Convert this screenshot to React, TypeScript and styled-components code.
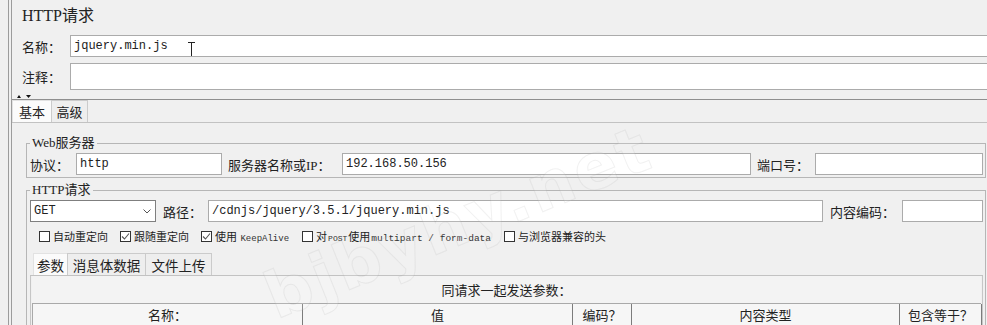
import React from "react";
import styled, { createGlobalStyle } from "styled-components";

const serif = `"Liberation Serif", "Noto Sans CJK SC", serif`;
const cjk = `"Noto Sans CJK SC", sans-serif`;
const mono = `"Liberation Mono", "Noto Sans CJK SC", monospace`;

const GlobalStyle = createGlobalStyle`
  html, body {
    margin: 0;
    padding: 0;
    background: #f0f0f0;
  }
  body {
    font-family: ${cjk};
    color: #1c1c1c;
  }
  * {
    box-sizing: border-box;
  }
`;

const Window = styled.div`
  position: relative;
  width: 987px;
  height: 325px;
  overflow: hidden;
  padding-left: 8px;
`;

const Frame = styled.div`
  height: 100%;
  border-left: 4px double #9c9c9c;
  display: flex;
  flex-direction: column;
`;

const Header = styled.div`
  padding: 4px 0 0 10px;
  display: flex;
  flex-direction: column;
`;

const Title = styled.div`
  font-family: ${serif};
  font-size: 16px;
  line-height: 24px;
  height: 24px;
  color: #222;
`;

const FieldRow = styled.div<{ $h: number; $mt?: number }>`
  display: flex;
  align-items: center;
  height: ${(p) => p.$h}px;
  margin-top: ${(p) => p.$mt ?? 0}px;
`;

const Label = styled.span<{ $w: number; $pad?: number }>`
  flex: none;
  width: ${(p) => p.$w}px;
  padding-left: ${(p) => p.$pad ?? 0}px;
  font-family: ${serif};
  font-size: 13px;
  white-space: nowrap;
  color: #222;
`;

const TextBox = styled.div<{ $w?: number; $open?: boolean }>`
  position: relative;
  flex: ${(p) => (p.$w ? "none" : 1)};
  width: ${(p) => (p.$w ? `${p.$w}px` : "auto")};
  height: 100%;
  background: #fff;
  border: 1px solid #ababab;
  border-right: ${(p) => (p.$open ? "none" : "1px solid #ababab")};
  padding-left: 3px;
  font-family: ${mono};
  font-size: 12px;
  color: #222;
  display: flex;
  align-items: center;
  white-space: nowrap;
  overflow: hidden;
`;

const Cursor = styled.svg`
  position: absolute;
  left: 117px;
  top: 6px;
`;

const Splitter = styled.div`
  height: 10px;
  border-bottom: 1px solid #8f8f8f;
  display: flex;
  align-items: flex-end;
  padding-left: 5px;
`;

const TabStrip = styled.div<{ $pad?: number }>`
  display: flex;
  height: 23px;
  padding-left: ${(p) => p.$pad ?? 0}px;
  border-bottom: 1px solid #c2c2c2;
  flex: none;
`;

const Tab = styled.div<{ $w: number; $active?: boolean; $size?: number }>`
  width: ${(p) => p.$w}px;
  height: 22px;
  display: flex;
  align-items: center;
  justify-content: center;
  font-family: ${cjk};
  font-size: ${(p) => p.$size ?? 13}px;
  background: ${(p) => (p.$active ? "#fbfbfb" : "#eeeeee")};
  border: 1px solid ${(p) => (p.$active ? "#e2e2e2" : "#cbcbcb")};
  border-bottom: none;
  margin-left: ${(p) => (p.$active ? 0 : -1)}px;
  color: #222;
`;

const TabBody = styled.div`
  flex: 1;
  padding: 13px 1px 0 14px;
  display: flex;
  flex-direction: column;
  min-height: 0;
`;

const Group = styled.fieldset<{ $mt?: number; $grow?: boolean }>`
  margin: ${(p) => p.$mt ?? 0}px 0 0 0;
  padding: 3px 2px 2px 3px;
  border: 1px solid #b6b6b6;
  min-width: 0;
  flex: ${(p) => (p.$grow ? 1 : "none")};
  display: flex;
  flex-direction: column;
`;

const Legend = styled.legend`
  font-family: ${serif};
  font-size: 13px;
  line-height: 14px;
  padding: 0 2px;
  color: #222;
`;

const Select = styled.div<{ $w: number }>`
  flex: none;
  width: ${(p) => p.$w}px;
  height: 100%;
  background: #fff;
  border: 1px solid #7f7f7f;
  padding: 0 4px 0 3px;
  display: flex;
  align-items: center;
  justify-content: space-between;
  font-family: ${mono};
  font-size: 12px;
  color: #222;
`;

const CheckRow = styled.div`
  display: flex;
  align-items: center;
  height: 14px;
  margin-top: 7px;
  padding-left: 9px;
  gap: 12px;
`;

const CheckItem = styled.div`
  display: flex;
  align-items: center;
  gap: 3px;
  font-family: ${cjk};
  font-size: 11px;
  white-space: nowrap;
  color: #222;
`;

const Box = styled.span`
  width: 11px;
  height: 11px;
  border: 1px solid #333;
  background: #fff;
  display: flex;
  align-items: center;
  justify-content: center;
`;

const Small = styled.span<{ $size: number }>`
  font-family: ${mono};
  font-size: ${(p) => p.$size}px;
  color: #333;
  margin: 0 1px;
`;

const SubPanel = styled.div`
  flex: 1;
  border: 1px solid #c6c6c6;
  border-bottom: none;
  border-top: none;
  padding: 0 1px;
  display: flex;
  flex-direction: column;
`;

const CaptionBar = styled.div`
  height: 27px;
  display: flex;
  align-items: center;
  justify-content: center;
  font-family: ${cjk};
  font-size: 13px;
  background: #f3f3f3;
  color: #222;
`;

const TableHead = styled.div`
  display: flex;
  height: 22px;
  border-top: 1px solid #a9a9a9;
  border-left: 1px solid #a9a9a9;
`;

const HeadCell = styled.div<{ $w: number }>`
  flex: none;
  width: ${(p) => p.$w}px;
  display: flex;
  align-items: center;
  justify-content: center;
  background: #f6f6f6;
  border-right: 1px solid #7c7c7c;
  font-family: ${cjk};
  font-size: 13px;
  color: #222;
`;

const Watermark = styled.div`
  position: absolute;
  left: 268px;
  top: 262px;
  transform: rotate(-22deg);
  transform-origin: left center;
  font-family: "DejaVu Sans", sans-serif;
  font-weight: bold;
  font-size: 64px;
  letter-spacing: 3px;
  color: rgba(255, 255, 255, 0.12);
  -webkit-text-stroke: 1px rgba(170, 170, 170, 0.16);
  pointer-events: none;
  white-space: nowrap;
`;

const Check = ({ on, children }: { on?: boolean; children: React.ReactNode }) => (
  <CheckItem>
    <Box>
      {on && (
        <svg width="9" height="9" viewBox="0 0 9 9">
          <path d="M1 4.5 L3.5 7 L8 1.5" fill="none" stroke="#555" strokeWidth="1.1" />
        </svg>
      )}
    </Box>
    <span>{children}</span>
  </CheckItem>
);

const columns = [
  { w: 270, t: "名称：" },
  { w: 270, t: "值" },
  { w: 59, t: "编码？" },
  { w: 268, t: "内容类型" },
  { w: 82, t: "包含等于？" },
];

export default function App() {
  return (
    <>
      <GlobalStyle />
      <Window>
        <Frame>
          <Header>
            <Title>HTTP请求</Title>
            <FieldRow $h={22} $mt={7}>
              <Label $w={48}>名称：</Label>
              <TextBox $open>
                jquery.min.js
                <Cursor width="7" height="17" viewBox="0 0 7 17">
                  <path d="M0 0.5 H7 M3.5 0.5 V16.5 M0 16.5 H7" stroke="#222" strokeWidth="1" fill="none" />
                </Cursor>
              </TextBox>
            </FieldRow>
            <FieldRow $h={27} $mt={6}>
              <Label $w={48}>注释：</Label>
              <TextBox $open />
            </FieldRow>
          </Header>
          <Splitter>
            <svg width="15" height="5" viewBox="0 0 15 5">
              <polygon points="0,4 2,1 4,4" fill="#111" />
              <polygon points="9,1 14,1 11.5,4" fill="#111" />
            </svg>
          </Splitter>
          <TabStrip>
            <Tab $w={40} $active>
              基本
            </Tab>
            <Tab $w={37}>高级</Tab>
          </TabStrip>
          <TabBody>
            <Group>
              <Legend>Web服务器</Legend>
              <FieldRow $h={22}>
                <Label $w={46}>协议：</Label>
                <TextBox $w={146}>http</TextBox>
                <Label $w={120} $pad={6}>
                  服务器名称或IP：
                </Label>
                <TextBox $w={409}>192.168.50.156</TextBox>
                <Label $w={64} $pad={6}>
                  端口号：
                </Label>
                <TextBox $w={168} />
              </FieldRow>
            </Group>
            <Group $mt={5} $grow>
              <Legend>HTTP请求</Legend>
              <FieldRow $h={22}>
                <Select $w={126}>
                  <span>GET</span>
                  <svg width="8" height="5" viewBox="0 0 8 5">
                    <path d="M0.5 0.5 L4 4 L7.5 0.5" fill="none" stroke="#555" strokeWidth="1" />
                  </svg>
                </Select>
                <Label $w={52} $pad={7}>
                  路径：
                </Label>
                <TextBox $w={615}>/cdnjs/jquery/3.5.1/jquery.min.js</TextBox>
                <Label $w={79} $pad={7}>
                  内容编码：
                </Label>
                <TextBox $w={81} />
              </FieldRow>
              <CheckRow>
                <Check>自动重定向</Check>
                <Check on>跟随重定向</Check>
                <Check on>
                  使用 <Small $size={9}>KeepAlive</Small>
                </Check>
                <Check>
                  对<Small $size={8}>POST</Small>使用<Small $size={9.5}>multipart / form-data</Small>
                </Check>
                <Check>与浏览器兼容的头</Check>
              </CheckRow>
              <TabStrip $pad={3} style={{ marginTop: 10 }}>
                <Tab $w={35} $active $size={13.5}>
                  参数
                </Tab>
                <Tab $w={79} $size={13.5}>
                  消息体数据
                </Tab>
                <Tab $w={67} $size={13.5}>
                  文件上传
                </Tab>
              </TabStrip>
              <SubPanel>
                <CaptionBar>同请求一起发送参数：</CaptionBar>
                <TableHead>
                  {columns.map((c) => (
                    <HeadCell key={c.t} $w={c.w}>
                      {c.t}
                    </HeadCell>
                  ))}
                </TableHead>
              </SubPanel>
            </Group>
          </TabBody>
        </Frame>
        <Watermark>bjbyhy.net</Watermark>
      </Window>
    </>
  );
}
